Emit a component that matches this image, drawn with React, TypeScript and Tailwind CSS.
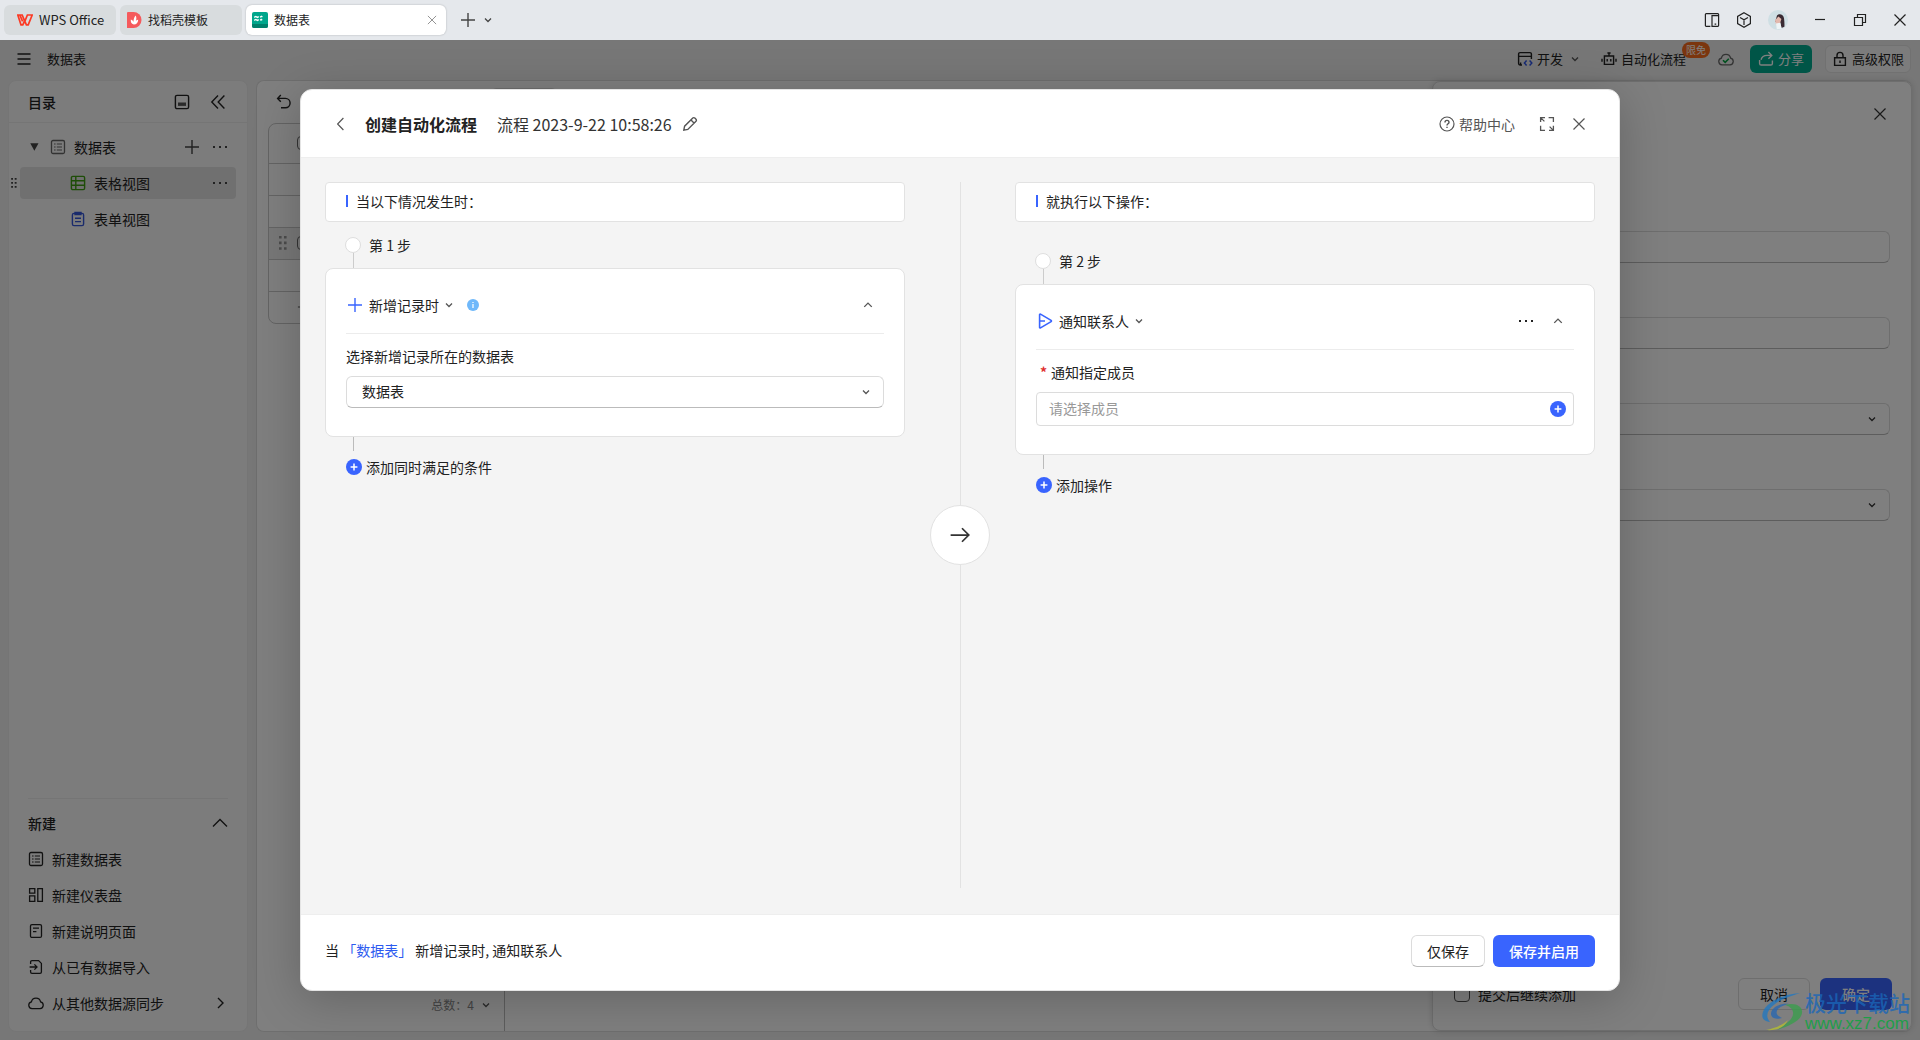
import type { ReactNode } from "react";
import clsx from "clsx";

type IconProps = { children: ReactNode; className?: string };

// Line icon on a 16px grid, inherits the text colour
function Icon({ children, className }: IconProps) {
  return (
    <svg
      viewBox="0 0 16 16"
      fill="none"
      stroke="currentColor"
      strokeWidth="1.2"
      className={clsx("shrink-0", className ?? "size-4")}
      aria-hidden
    >
      {children}
    </svg>
  );
}

const CloseIcon = ({ className }: { className?: string }) => (
  <Icon className={className}>
    <path d="M2.5 2.5l11 11M13.5 2.5l-11 11" />
  </Icon>
);

const ChevronDown = ({ className }: { className?: string }) => (
  <Icon className={className ?? "size-2"}>
    <path d="M2 5l6 6 6-6" strokeWidth="2.6" />
  </Icon>
);

const ChevronUp = ({ className }: { className?: string }) => (
  <Icon className={className ?? "size-2.5"}>
    <path d="M2 11l6-6 6 6" strokeWidth="2.2" />
  </Icon>
);

const DotsIcon = () => (
  <Icon>
    <path
      d="M1 7h2v2H1zM7 7h2v2H7zM13 7h2v2h-2z"
      fill="currentColor"
      stroke="none"
    />
  </Icon>
);

const PlusIcon = ({ className }: { className?: string }) => (
  <Icon className={className}>
    <path d="M8 1v14M1 8h14" strokeWidth="1.4" />
  </Icon>
);

const PlusBadge = () => (
  <svg viewBox="0 0 16 16" className="size-4 shrink-0" aria-hidden>
    <circle cx="8" cy="8" r="8" fill="#3964fe" />
    <path d="M8 4.6v6.8M4.6 8h6.8" stroke="#fff" strokeWidth="1.5" />
  </svg>
);

const DragIcon = ({ className }: { className?: string }) => (
  <svg
    viewBox="0 0 8 14"
    fill="currentColor"
    className={clsx("shrink-0", className)}
    aria-hidden
  >
    <path d="M0 0h2.6v2.6H0zM5 0h2.6v2.6H5zM0 5.6h2.6v2.6H0zM5 5.6h2.6v2.6H5zM0 11.2h2.6v2.6H0zM5 11.2h2.6v2.6H5z" />
  </svg>
);

const SheetIcon = () => (
  <Icon>
    <rect x="1.5" y="1.5" width="13" height="13" rx="1.5" strokeWidth="1.3" />
    <path d="M4 5h1.6M4 8h1.6M4 11h1.6M6.8 5H12M6.8 8H12M6.8 11H12" />
  </Icon>
);

const createItems = [
  { label: "新建数据表", icon: <SheetIcon /> },
  {
    label: "新建仪表盘",
    icon: (
      <Icon>
        <path
          d="M1.6 1.6h5.2v4.6H1.6zM1.6 8.8h5.2v5.6H1.6zM9.8 1.6h4.6v12.8H9.8z"
          strokeWidth="1.3"
        />
      </Icon>
    ),
  },
  {
    label: "新建说明页面",
    icon: (
      <Icon>
        <rect x="2.5" y="1.6" width="11" height="12.8" rx="1.5" strokeWidth="1.3" />
        <path d="M5 5.2h6M5 8.6h3.4" />
      </Icon>
    ),
  },
  {
    label: "从已有数据导入",
    icon: (
      <Icon>
        <path
          d="M2.6 5V3a1.4 1.4 0 011.4-1.4h6.6l2.8 2.8V13a1.4 1.4 0 01-1.4 1.4H4A1.4 1.4 0 012.6 13v-2M1.6 8h7M6.4 5.4L9 8l-2.6 2.6"
          strokeWidth="1.3"
        />
      </Icon>
    ),
  },
  {
    label: "从其他数据源同步",
    icon: (
      <Icon>
        <path
          d="M4 13.6a3.4 3.4 0 01-.6-6.7 4.7 4.7 0 019.2 0 3.4 3.4 0 01-.6 6.7z"
          strokeWidth="1.3"
        />
      </Icon>
    ),
    more: true,
  },
];

function TitleBar() {
  return (
    <header className="flex h-10 shrink-0 items-center justify-between bg-[#e5e8ec] pl-1 text-[13px] text-[#222]">
      <nav className="flex items-center gap-1">
        <button className="flex h-[30px] w-28 items-center gap-1.5 rounded-md bg-[#d8dcde] pl-[13px]">
          <svg viewBox="0 0 16 12" className="h-3 w-4" aria-hidden>
            <path
              d="M.8 1h4.4l2.6 6.4L10.4 1h4.8l-4 9.8H9.4L7.6 6.6 5.8 10.8H4zM3 1.4l2.6 6"
              fill="none"
              stroke="#fb3a24"
              strokeWidth="1.7"
            />
          </svg>
          WPS Office
        </button>
        <button className="flex h-[30px] w-[122px] items-center gap-1.5 rounded-md bg-[#d8dcde] pl-1.5 text-xs">
          <svg viewBox="0 0 16 16" className="size-4" aria-hidden>
            <path d="M2 0h5.5a8 8 0 010 16H1V1a1 1 0 011-1z" fill="#f55a5c" />
            <path
              d="M7.8 12.6c-2.6-.6-3.2-2.4-3-5 1.6.6 2.4 1.4 2.6 2.4.2-2.6.8-4.8 2.2-6.4 1 1.8 1 3.6.2 5.4.6-.8 1.4-1.2 2.4-1.2-.2 3-1.6 4.6-4.4 4.8z"
              fill="#fff"
            />
          </svg>
          找稻壳模板
        </button>
        <div className="flex h-[30px] w-[200px] items-center gap-1.5 rounded-md bg-white px-1.5 text-xs shadow-[0_0_2px_rgba(0,0,0,0.25)]">
          <svg viewBox="0 0 16 16" className="size-4" aria-hidden>
            <rect width="16" height="16" rx="2" fill="#00a68c" />
            <path d="M0 12h16v2a2 2 0 01-2 2H2a2 2 0 01-2-2z" fill="#00806c" />
            <path
              d="M2.2 5.4l1.6-1 1.6 1 1.4-.8M2.2 8.4l1.6-1 1.6 1 1.4-.8M8 5.2l1.4-1 1 .8M8 8.2l1.2-.8 1 .8"
              stroke="#fff"
              strokeWidth="1.3"
              fill="none"
            />
          </svg>
          <span className="flex-1">数据表</span>
          <button aria-label="关闭标签" className="mr-0.5 text-[#888]">
            <CloseIcon className="size-3" />
          </button>
        </div>
        <button aria-label="新建标签" className="ml-2.5 text-[#444]">
          <PlusIcon className="size-4" />
        </button>
        <button aria-label="标签列表" className="ml-1 text-[#444]">
          <ChevronDown />
        </button>
      </nav>
      <div className="flex items-center gap-6 pr-3 text-[#222]">
        <div className="flex items-center gap-4">
          <button aria-label="分屏">
            <Icon>
              <path d="M6.4 14.4H2.2a.8.8 0 01-.8-.8V2.4a.8.8 0 01.8-.8h11.6a.8.8 0 01.8.8v11.2a.8.8 0 01-.8.8H8V3.6h6M10.6 12.2h1.6" />
            </Icon>
          </button>
          <button aria-label="应用">
            <Icon>
              <path d="M8 .8l6.4 3.6v7.2L8 15.2l-6.4-3.6V4.4zM4 5.4l4 2.4 4-2.4M8 7.8V13" />
            </Icon>
          </button>
          <button aria-label="账号">
            <svg viewBox="0 0 20 20" className="size-5" aria-hidden>
              <circle cx="10" cy="10" r="10" fill="#cfdfe4" />
              <path
                d="M9 5.6c2-2.6 6.4-1.4 7 2.6.4 3 .6 6 .4 8.6l-3 1.2-1-5.4-5.2-.8z"
                fill="#3a2b33"
              />
              <path d="M7 10.2l3.4-3.8 3 2.6-1.6 5-3.6 1.4z" fill="#e3b9ae" />
              <path d="M8 13.6l4.2-.8 1.6 6-5 .4z" fill="#eef4f6" />
            </svg>
          </button>
        </div>
        <button aria-label="最小化">
          <Icon>
            <path d="M3 7.5h10" />
          </Icon>
        </button>
        <button aria-label="还原">
          <Icon>
            <path d="M2.5 5.5h8v8h-8zM5.5 5.5v-3h8v8h-3" />
          </Icon>
        </button>
        <button aria-label="关闭">
          <CloseIcon />
        </button>
      </div>
    </header>
  );
}

function AppHeader() {
  return (
    <div className="flex h-10 shrink-0 items-center justify-between pr-[9px] pl-4 pb-0.5 text-[13px] text-[#222]">
      <div className="flex items-center gap-[15px]">
        <button aria-label="菜单">
          <Icon>
            <path d="M1.5 3h13M1.5 8h13M1.5 13h13" strokeWidth="1.6" />
          </Icon>
        </button>
        <span>数据表</span>
      </div>
      <div className="flex items-center">
        <button className="flex items-center gap-1">
          <Icon>
            <path d="M5 14H3a1.4 1.4 0 01-1.4-1.4V3A1.4 1.4 0 013 1.6h10A1.4 1.4 0 0114.4 3v5M1.6 5.4h12.8M3.6 14v-2.4" strokeWidth="1.4" />
            <path d="M9.6 9.6L7.4 12l2.2 2.4M12.6 9.6l2.2 2.4-2.2 2.4" stroke="#2f55e8" strokeWidth="1.5" />
          </Icon>
          开发
          <span className="ml-1 text-[#555]">
            <ChevronDown />
          </span>
        </button>
        <button className="relative ml-[22px] flex items-center gap-1">
          <Icon>
            <path
              d="M3.4 5h9.2v8.4H3.4zM8 5V2M6.4 2h3.2M1 7.8v3M15 7.8v3M6.2 8v2.4M9.8 8v2.4"
              strokeWidth="1.4"
            />
          </Icon>
          自动化流程
          <span className="absolute -top-[7px] -right-6 rounded-full bg-[#f76a1c] px-1 text-[10px] leading-4 text-white">
            限免
          </span>
        </button>
        <span className="ml-8">
          <Icon className="size-4 text-[#666]">
            <path
              d="M4 13.8a3.4 3.4 0 01-.6-6.7 4.7 4.7 0 019.2 0 3.4 3.4 0 01-.6 6.7z"
              strokeWidth="1.3"
            />
            <path d="M5 9.2l2.2 2.2 3.6-3.6" stroke="#00a03c" strokeWidth="1.6" />
          </Icon>
        </span>
        <button className="ml-4 flex h-7 items-center gap-1 rounded-md bg-[#00aa8f] px-2 text-white">
          <Icon className="size-4">
            <path
              d="M1.6 9v3.4A1.6 1.6 0 003.2 14h9.6a1.6 1.6 0 001.6-1.6V9.6M3 8.8c.8-3 3-4.4 6-4.4h4.6M10.4 1l3.4 3.4-3.4 3.4"
              strokeWidth="1.4"
            />
          </Icon>
          分享
        </button>
        <button className="ml-[13px] flex h-7 items-center gap-1 rounded-md border border-[#e2e2e2] bg-[#f9f9f9] px-1.5">
          <Icon>
            <path
              d="M2.6 6.8h10.8v7.6H2.6zM5 6.8V4.4a3 3 0 016 0v2.4M8 9.4v2.6"
              strokeWidth="1.4"
            />
          </Icon>
          高级权限
        </button>
      </div>
    </div>
  );
}

function Sidebar() {
  return (
    <aside className="flex w-60 shrink-0 flex-col rounded-lg border border-[#ebebeb] bg-[#f8f8f8] text-sm text-[#222]">
      <div className="flex h-[42px] shrink-0 items-center gap-5 border-b border-[#ebebeb] px-[19px]">
        <h2 className="flex-1 font-medium">目录</h2>
        <button aria-label="收起面板">
          <Icon>
            <rect x="1.4" y="1.4" width="13.2" height="13.2" rx="1.6" strokeWidth="1.4" />
            <path d="M4 8.5h8v3.4H4z" fill="#555" stroke="none" />
          </Icon>
        </button>
        <button aria-label="折叠目录" className="mr-0.5">
          <Icon>
            <path d="M8 1.6L1.8 8 8 14.4M14.4 1.6L8.2 8l6.2 6.4" strokeWidth="1.4" />
          </Icon>
        </button>
      </div>
      <ul className="flex flex-col gap-1 py-2">
        <li className="flex h-8 items-center px-[19px]">
          <Icon className="mr-2.5 size-3 text-[#444]">
            <path d="M3 3h11L8.5 13z" fill="currentColor" stroke="none" />
          </Icon>
          <span className="text-[#666]">
            <SheetIcon />
          </span>
          <span className="ml-2 flex-1">数据表</span>
          <button aria-label="添加视图" className="mr-3 text-[#444]">
            <PlusIcon className="size-4" />
          </button>
          <button aria-label="更多" className="text-[#444]">
            <DotsIcon />
          </button>
        </li>
        <li className="flex h-8 items-center pl-0.5">
          <DragIcon className="mr-[3px] h-2.5 w-1.5 text-[#444]" />
          <div className="mr-[11px] flex h-full flex-1 items-center rounded bg-[#e0e0e0] pr-2 pl-[50px]">
            <Icon className="size-4 text-[#3c9a10]">
              <rect x="1.4" y="1.4" width="13.2" height="13.2" rx="1.4" strokeWidth="1.4" />
              <path d="M1.4 5.8h13.2M1.4 10.2h13.2M5.8 1.4v13.2" strokeWidth="1.4" />
            </Icon>
            <span className="ml-2 flex-1">表格视图</span>
            <button aria-label="更多" className="text-[#444]">
              <DotsIcon />
            </button>
          </div>
        </li>
        <li className="flex h-8 items-center gap-2 pl-[61px]">
          <Icon className="size-4 text-[#3557d8]">
            <rect x="2.4" y="2.4" width="11.2" height="12.2" rx="1.6" strokeWidth="1.4" />
            <path d="M5 1.4h6v2.2H5zM5 7.2h6M5 10.6h6" strokeWidth="1.4" />
          </Icon>
          表单视图
        </li>
      </ul>
      <div className="mx-[19px] mt-auto border-t border-[#ebebeb] pb-2.5 pt-1.5">
        <div className="flex h-9 items-center justify-between">
          <h2 className="font-medium">新建</h2>
          <button aria-label="收起">
            <Icon>
              <path d="M1 11.5l7-7 7 7" strokeWidth="1.3" />
            </Icon>
          </button>
        </div>
        {createItems.map((item) => (
          <button key={item.label} className="flex h-9 w-full items-center gap-2">
            {item.icon}
            <span className="flex-1 text-left">{item.label}</span>
            {item.more ? (
              <Icon>
                <path d="M6 3l5 5-5 5" strokeWidth="1.4" />
              </Icon>
            ) : null}
          </button>
        ))}
      </div>
    </aside>
  );
}

function DataGrid() {
  return (
    <div className="flex min-w-0 flex-1 flex-col">
      <div className="flex h-[42px] shrink-0 items-center gap-[200px] px-[19px]">
        <button aria-label="撤销" className="text-[#222]">
          <Icon>
            <path d="M4.8 1L1.6 4.4l3.2 3.4M1.6 4.4h7.8a4.6 4.6 0 010 9.4H5" strokeWidth="1.4" />
          </Icon>
        </button>
        <button
          aria-label="字段配置"
          className="h-7 w-16 rounded border border-[#ddd]"
        />
      </div>
      <div className="mx-[11px] overflow-hidden rounded-lg border border-[#c8c8c8]">
        <table className="w-full">
          <tbody>
            {["head", "r1", "r2", "r3", "r4"].map((row) => (
              <tr
                key={row}
                className={clsx(
                  "border-b border-[#c8c8c8]",
                  row === "head" ? "h-[39px]" : "h-8",
                  row === "r3" && "bg-[#f1f1f1]",
                )}
              >
                <td className="w-16 pl-2.5">
                  <div className="flex items-center gap-2.5">
                    <DragIcon
                      className={clsx(
                        "h-3.5 w-2 text-[#999]",
                        row !== "r3" && "invisible",
                      )}
                    />
                    {row === "head" || row === "r3" ? (
                      <input
                        type="checkbox"
                        aria-label="选择"
                        className="size-3.5 appearance-none rounded-sm border border-[#666]"
                      />
                    ) : null}
                  </div>
                </td>
                <td />
              </tr>
            ))}
            <tr className="h-8">
              <td className="pl-7">
                <button aria-label="添加记录" className="block text-[#555]">
                  <PlusIcon className="size-3.5" />
                </button>
              </td>
              <td />
            </tr>
          </tbody>
        </table>
      </div>
      <div className="mt-auto flex h-[52px] w-[248px] items-center justify-end gap-2 border-r border-[#bbb] pr-3.5 text-xs text-[#888]">
        <span>总数：4</span>
        <span className="text-[#555]">
          <ChevronDown />
        </span>
      </div>
    </div>
  );
}

function RecordDrawer() {
  const field =
    "h-8 w-full appearance-none rounded-md border border-[#dcdcdc] border-b-[#bbb] bg-white px-3";
  return (
    <section className="flex w-[480px] shrink-0 flex-col rounded-lg border border-[#ddd] bg-white px-[21px] text-sm text-[#222] shadow-[0_0_6px_rgba(0,0,0,0.15)]">
      <div className="flex h-16 items-center justify-end pr-0.5">
        <button aria-label="关闭" className="text-[#333]">
          <CloseIcon />
        </button>
      </div>
      <div className="mt-[85px] flex flex-col gap-[54px]">
        <input aria-label="文本" className={field} />
        <input aria-label="数量" className={field} />
        {["单选", "日期"].map((name) => (
          <div key={name} className="relative">
            <select aria-label={name} className={field} />
            <span className="pointer-events-none absolute inset-y-0 right-3.5 flex items-center text-[#333]">
              <ChevronDown />
            </span>
          </div>
        ))}
      </div>
      <div className="-mr-0.5 mt-auto mb-5 flex items-center">
        <label className="flex flex-1 items-center gap-2">
          <input
            type="checkbox"
            className="size-4 appearance-none rounded-sm border border-[#555]"
          />
          提交后继续添加
        </label>
        <button className="h-8 w-[72px] rounded-md border border-[#ddd]">取消</button>
        <button className="ml-2.5 h-8 w-[72px] rounded-md bg-[#3964fe] font-medium text-white">
          确定
        </button>
      </div>
    </section>
  );
}

function Caption({ children }: { children: ReactNode }) {
  return (
    <h3 className="flex h-10 items-center gap-2 rounded border border-[#e2e2e2] bg-white px-5 pb-0.5">
      <span className="h-3 w-0.5 bg-[#3964fe]" />
      {children}
    </h3>
  );
}

type StepProps = {
  step: number;
  icon: ReactNode;
  title: string;
  info?: boolean;
  menu?: boolean;
  addLabel: string;
  children: ReactNode;
};

function Step({ step, icon, title, info, menu, addLabel, children }: StepProps) {
  return (
    <div>
      <div className="flex gap-2 pl-5">
        <div className="flex w-4 flex-col items-center">
          <span className="size-4 rounded-full border border-[#dedede] bg-white" />
          <span className="h-[15px] w-px bg-[#ccc]" />
        </div>
        <span className="leading-4">第 {step} 步</span>
      </div>
      <div className="rounded-lg border border-[#e2e2e2] bg-white px-5 pb-7">
        <div className="flex h-[65px] items-center border-b border-[#ececec] pt-2 pl-px">
          <button className="flex items-center gap-1.5">
            {icon}
            {title}
            <span className="text-[#555]">
              <ChevronDown />
            </span>
          </button>
          {info ? (
            <svg viewBox="0 0 12 12" className="ml-3.5 size-3" aria-hidden>
              <circle cx="6" cy="6" r="6" fill="#6fb8fa" />
              <path d="M6 3v1M6 5v4" stroke="#fff" strokeWidth="1.2" />
            </svg>
          ) : null}
          <div className="mr-[11px] ml-auto flex items-center gap-[19px]">
            {menu ? (
              <button aria-label="更多操作">
                <DotsIcon />
              </button>
            ) : null}
            <button aria-label="收起步骤" className="text-[#555]">
              <ChevronUp />
            </button>
          </div>
        </div>
        {children}
      </div>
      <div className="ml-7 h-3.5 w-px bg-[#bbb]" />
      <button className="mt-2 ml-[21px] flex items-center gap-1 leading-4">
        <PlusBadge />
        {addLabel}
      </button>
    </div>
  );
}

function FlowDialog() {
  return (
    <div
      role="dialog"
      aria-labelledby="flow-title"
      className="flex h-full w-full max-w-[1320px] flex-col overflow-hidden rounded-xl border border-[#e4e4e4] bg-white text-sm text-[#222] shadow-[0_8px_48px_rgba(0,0,0,0.22)]"
    >
      <div className="flex h-[68px] shrink-0 items-center border-b border-[#eee] px-8 text-[#555]">
        <button aria-label="返回">
          <Icon>
            <path d="M10.4 2L4.6 8l5.8 6" />
          </Icon>
        </button>
        <h1 id="flow-title" className="ml-4 text-base leading-5 font-bold text-[#222]">
          创建自动化流程
        </h1>
        <span className="ml-5 text-base leading-5 text-[#333]">
          流程 2023-9-22 10:58:26
        </span>
        <button aria-label="重命名" className="ml-2.5">
          <Icon>
            <path
              d="M1.8 14.2l.8-4L10.8 2a1.4 1.4 0 012 0l1.2 1.2a1.4 1.4 0 010 2l-8.2 8.2zM9 4l3 3"
              strokeWidth="1.4"
            />
          </Icon>
        </button>
        <a href="#help" className="ml-auto flex items-center gap-1">
          <Icon>
            <circle cx="8" cy="8" r="7" />
            <path d="M6 6.4a2 2 0 114 0c0 1.3-2 1.5-2 3M8 10.8v1.3" strokeWidth="1.4" />
          </Icon>
          帮助中心
        </a>
        <button aria-label="全屏" className="ml-6">
          <Icon>
            <path
              d="M1.6 6V1.6H6M1.6 1.6l3.8 3.8M9.6 1.6h4.8V6M14.4 9.8v4.6H10M14.4 14.4l-3.8-3.8M1.6 9.8v4.6H6"
              strokeWidth="1.3"
            />
          </Icon>
        </button>
        <button aria-label="关闭弹窗" className="ml-4">
          <CloseIcon />
        </button>
      </div>

      <div className="flex min-h-0 flex-1 bg-[#f4f4f4] px-6 pt-6 pb-[26px]">
        <div className="flex flex-1 flex-col gap-[15px]">
          <Caption>当以下情况发生时：</Caption>
          <Step
            step={1}
            icon={
              <span className="text-[#3964fe]">
                <PlusIcon className="size-4" />
              </span>
            }
            title="新增记录时"
            info
            addLabel="添加同时满足的条件"
          >
            <label htmlFor="source-table" className="block pt-3 pb-2.5">
              选择新增记录所在的数据表
            </label>
            <div className="relative">
              <select
                id="source-table"
                className="h-8 w-full appearance-none rounded-md border border-[#dcdcdc] border-b-[#bbb] bg-white px-[15px] pb-0.5"
              >
                <option>数据表</option>
              </select>
              <span className="pointer-events-none absolute inset-y-0 right-3.5 flex items-center text-[#555]">
                <ChevronDown />
              </span>
            </div>
          </Step>
        </div>

        <div className="flex w-[110px] flex-col items-center">
          <span className="w-px flex-1 bg-[#e2e2e2]" />
          <span className="flex size-[60px] items-center justify-center rounded-full border border-[#e2e2e2] bg-white text-[#333]">
            <Icon className="size-5">
              <path d="M0.5 8h14.5M9.6 2.6L15 8l-5.4 5.4" strokeWidth="1.4" />
            </Icon>
          </span>
          <span className="w-px flex-1 bg-[#e2e2e2]" />
        </div>

        <div className="flex flex-1 flex-col gap-[31px]">
          <Caption>就执行以下操作：</Caption>
          <Step
            step={2}
            icon={
              <Icon className="size-4 text-[#3964fe]">
                <path
                  d="M2.6 1.6a.6.6 0 01.9-.5l10.6 6.3a.7.7 0 010 1.2L3.5 14.9a.6.6 0 01-.9-.5zM3 8h5"
                  strokeWidth="1.6"
                />
              </Icon>
            }
            title="通知联系人"
            menu
            addLabel="添加操作"
          >
            <label htmlFor="members" className="flex gap-1 pt-3 pb-2.5 pl-1">
              <span className="font-bold text-[#e02f2f]">*</span>
              通知指定成员
            </label>
            <div className="flex h-[34px] items-center rounded border border-[#dcdcdc] pr-[7px] pl-3">
              <input
                id="members"
                placeholder="请选择成员"
                className="min-w-0 flex-1 pb-0.5 outline-none placeholder:text-[#999]"
              />
              <button aria-label="选择成员">
                <PlusBadge />
              </button>
            </div>
          </Step>
        </div>
      </div>

      <div className="flex h-[76px] shrink-0 items-center justify-between border-t border-[#eee] px-6 pb-1">
        <p className="pb-0.5">
          当 <span className="text-[#2c5af0]">「数据表」</span> 新增记录时, 通知联系人
        </p>
        <div className="flex gap-2">
          <button className="h-8 rounded-md border border-[#dcdcdc] border-b-[#bbb] px-[15px]">
            仅保存
          </button>
          <button className="h-8 rounded-md bg-[#3964fe] px-4 font-medium text-white">
            保存并启用
          </button>
        </div>
      </div>
    </div>
  );
}

function Watermark() {
  return (
    <div className="pointer-events-none absolute right-2.5 bottom-1.5 flex items-center">
      <svg viewBox="0 0 44 40" className="h-10 w-11 opacity-75" aria-hidden>
        <path
          d="M39 1C24 2 10 8 4 16c-5 8-3 13 5 14-5-6-3-12 5-18C20 7 30 4 39 1z"
          fill="#1d78c4"
        />
        <path
          d="M28 12c-10-1-18 4-18 10 0 4 5 6 11 4-5-2-7-5-4-9 3-3 7-4 11-5z"
          fill="#2566b4"
        />
        <path
          d="M24 13c10-3 18 1 17 8-1 8-13 13-25 17 11-7 17-12 16-18-1-4-4-6-8-7z"
          fill="#36a04a"
        />
        <path d="M5 38c9-2 17-5 22-10-3 7-11 11-22 10z" fill="#b9c32c" />
      </svg>
      <div className="flex flex-col text-[21px] leading-6 font-medium text-[#1a66b8]/80">
        <span>极光下载站</span>
        <span className="font-['Liberation_Sans'] text-[17px] leading-5 text-[#1f9d4a]">
          www.xz7.com
        </span>
      </div>
    </div>
  );
}

export default function App() {
  return (
    <div className="flex h-screen flex-col overflow-hidden font-['Noto_Sans_CJK_SC',sans-serif]">
      <TitleBar />
      <div className="relative flex min-h-0 flex-1 flex-col bg-[#eee]">
        <AppHeader />
        <main className="flex min-h-0 flex-1 gap-2 px-2 pb-2">
          <Sidebar />
          <div className="flex min-w-0 flex-1 rounded-lg border border-r-0 border-[#ddd] bg-white">
            <DataGrid />
            <RecordDrawer />
          </div>
        </main>
        <div className="absolute inset-0 flex justify-center bg-black/50 py-[49px]">
          <FlowDialog />
        </div>
        <Watermark />
      </div>
    </div>
  );
}
